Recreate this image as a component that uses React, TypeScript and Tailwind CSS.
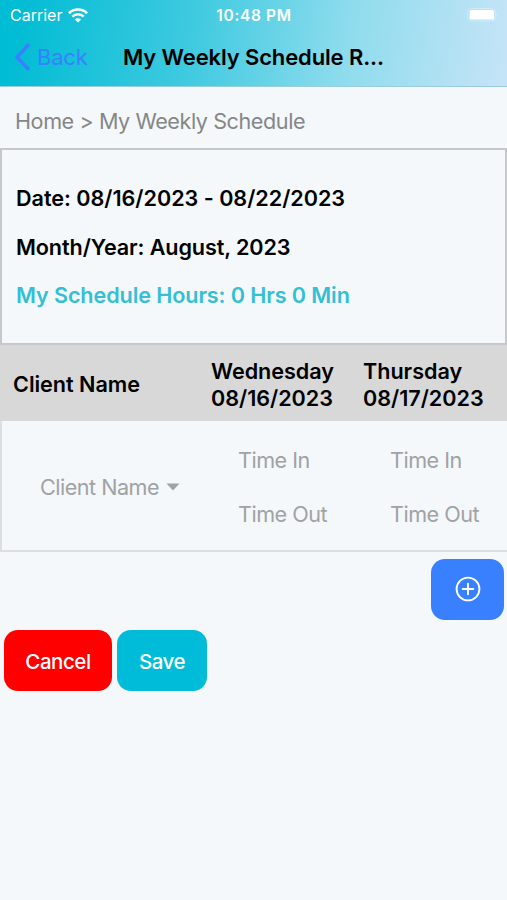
import clsx from "clsx";

interface Day {
  name: string;
  date: string;
}

const days: Day[] = [
  { name: "Wednesday", date: "08/16/2023" },
  { name: "Thursday", date: "08/17/2023" },
];

const actionButton = "h-[61px] rounded-[14px]";

function StatusBar() {
  return (
    <div className="grid h-[30px] grid-cols-3 items-center pr-[9px] pl-[10px] text-white">
      <div className="flex items-center gap-[6px]">
        <span className="text-[16px] leading-5">Carrier</span>
        <svg width="20" height="15" viewBox="0 0 20 15" fill="none" stroke="currentColor" aria-hidden="true">
          <path d="M1 5.2a12.8 12.8 0 0 1 18 0" strokeWidth="2.7" />
          <path d="M4.3 8.6a8.1 8.1 0 0 1 11.4 0" strokeWidth="2.6" />
          <path d="M10 14.6 6.9 11.5a4.4 4.4 0 0 1 6.2 0z" fill="currentColor" stroke="none" />
        </svg>
      </div>
      <div className="pt-px text-center text-[15.5px] leading-5 font-semibold tracking-[0.65px] whitespace-nowrap">
        10:48 PM
      </div>
      <div className="flex justify-end">
        <svg width="31" height="14" viewBox="0 0 31 14" aria-hidden="true">
          <rect x="0.5" y="0.5" width="28" height="12.5" rx="4" fill="none" stroke="white" strokeOpacity="0.3" />
          <rect x="2.6" y="2" width="24.4" height="9.4" rx="1.5" fill="white" />
          <path d="M29.5 4.5c1.6.8 1.6 4.2 0 5z" fill="white" fillOpacity="0.35" />
        </svg>
      </div>
    </div>
  );
}

function Header() {
  return (
    <header className="h-[87px] border-b border-[#9ccbd9] bg-[linear-gradient(98deg,#00bcd4_3%,#3fcae0_38%,#8edced_68%,#c6e4f7_100%)]">
      <StatusBar />
      <div className="flex h-[56px] items-center pb-[2px]">
        <button type="button" className="flex w-[123px] items-center pl-[14px] text-[#3880ff]">
          <svg width="17" height="28" viewBox="0 0 17 28" fill="none" aria-hidden="true">
            <path d="M14 2.2 3 14.2l11 11.6" stroke="currentColor" strokeWidth="3.6" strokeLinecap="round" strokeLinejoin="round" />
          </svg>
          <span className="ml-[6px] text-[22px] leading-7 tracking-[-0.2px]">Back</span>
        </button>
        <h1 className="text-[22px] leading-7 font-semibold tracking-[-0.13px] whitespace-nowrap text-black">
          My Weekly Schedule R...
        </h1>
      </div>
    </header>
  );
}

function SummaryBox() {
  return (
    <section className="flex h-[197px] flex-col gap-[21.5px] border-2 border-[#c6c7ca] pt-[35px] pl-[14px] text-[21.6px] leading-[27px] font-semibold tracking-[-0.06px] text-black">
      <p className="tracking-[-0.03px] whitespace-nowrap">Date: 08/16/2023 - 08/22/2023</p>
      <p className="tracking-[-0.1px] whitespace-nowrap">Month/Year: August, 2023</p>
      <p className="tracking-[-0.1px] whitespace-nowrap text-[#35bfd3]">My Schedule Hours: 0 Hrs 0 Min</p>
    </section>
  );
}

function ScheduleTable() {
  return (
    <section className="text-[21.6px] leading-[27px]">
      <div className="grid h-[76px] grid-cols-[211px_152px_144px] items-center bg-[#d8d8d8] pt-[3px] font-semibold tracking-[-0.03px] text-black">
        <div className="pl-[13px]">Client Name</div>
        {days.map((day) => (
          <div key={day.date}>
            <div>{day.name}</div>
            <div>{day.date}</div>
          </div>
        ))}
      </div>
      <div className="grid h-[131px] grid-cols-[209px_152px_144px] items-center border-b-2 border-l-2 border-[#dcdee0] pt-[3px] tracking-[-0.5px] text-[#a0a2a4]">
        <button type="button" className="flex items-center gap-[7px] pl-[38px]">
          <span className="whitespace-nowrap">Client Name</span>
          <svg width="14" height="8" viewBox="0 0 14 8" aria-hidden="true">
            <path d="M0.5 0.5h13L7 7.5z" fill="currentColor" />
          </svg>
        </button>
        {days.map((day) => (
          <div key={day.date} className="flex flex-col gap-[27px] pl-[27px]">
            <span>Time In</span>
            <span>Time Out</span>
          </div>
        ))}
      </div>
    </section>
  );
}

export default function App() {
  return (
    <main className="h-[900px] w-[507px] overflow-hidden bg-[#f4f8fb] font-['Inter','Liberation_Sans',sans-serif]">
      <Header />
      <nav className="flex h-[61px] items-center pt-[7px] pl-[15px] text-[21.6px] leading-7 tracking-[-0.43px] whitespace-nowrap text-[#858687]">
        Home &gt; My Weekly Schedule
      </nav>
      <SummaryBox />
      <ScheduleTable />
      <div className="flex justify-end pt-[7px] pr-[3px]">
        <button
          type="button"
          aria-label="Add row"
          className={clsx(actionButton, "flex w-[73px] items-center justify-center bg-[#3880ff] pb-[2px] text-white")}
        >
          <svg width="26" height="26" viewBox="0 0 26 26" fill="none" stroke="currentColor" aria-hidden="true">
            <circle cx="13" cy="13" r="11.4" strokeWidth="1.9" />
            <path d="M13 7.7v10.6M7.7 13h10.6" strokeWidth="1.9" strokeLinecap="round" />
          </svg>
        </button>
      </div>
      <div className="flex gap-[5px] pt-[10px] pl-[4px] text-[20.5px] leading-7 font-medium tracking-[-0.45px] text-white">
        <button type="button" className={clsx(actionButton, "w-[108px] bg-[#ff0000] pt-[2px]")}>
          Cancel
        </button>
        <button type="button" className={clsx(actionButton, "w-[90px] bg-[#00bcd8] pt-[2px]")}>
          Save
        </button>
      </div>
    </main>
  );
}
